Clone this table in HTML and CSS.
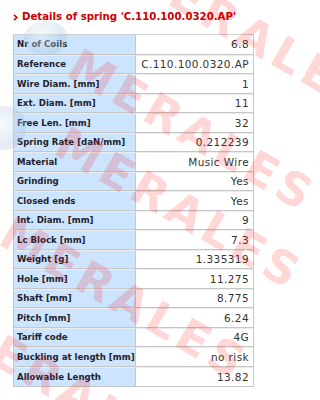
FILE: index.html
```html
<!DOCTYPE html>
<html>
<head>
<meta charset="utf-8">
<link rel="stylesheet" href="styles.css">
</head>
<body>
<div class="page">
  <h1 class="title">
    <svg class="chev" width="5" height="7" viewBox="0 0 5 7"><polyline points="1,0.8 3.8,3.5 1,6.2" fill="none" stroke="#cc0000" stroke-width="1.6"/></svg>
    <span>Details of spring 'C.110.100.0320.AP'</span>
  </h1>
  <table class="specs">
    <tr><td class="lbl">Nr of Coils</td><td class="val">6.8</td></tr>
    <tr><td class="lbl">Reference</td><td class="val">C.110.100.0320.AP</td></tr>
    <tr><td class="lbl">Wire Diam. [mm]</td><td class="val">1</td></tr>
    <tr><td class="lbl">Ext. Diam. [mm]</td><td class="val">11</td></tr>
    <tr><td class="lbl">Free Len. [mm]</td><td class="val">32</td></tr>
    <tr><td class="lbl">Spring Rate [daN/mm]</td><td class="val">0.212239</td></tr>
    <tr><td class="lbl">Material</td><td class="val">Music Wire</td></tr>
    <tr><td class="lbl">Grinding</td><td class="val">Yes</td></tr>
    <tr><td class="lbl">Closed ends</td><td class="val">Yes</td></tr>
    <tr><td class="lbl">Int. Diam. [mm]</td><td class="val">9</td></tr>
    <tr><td class="lbl">Lc Block [mm]</td><td class="val">7.3</td></tr>
    <tr><td class="lbl">Weight [g]</td><td class="val">1.335319</td></tr>
    <tr><td class="lbl">Hole [mm]</td><td class="val">11.275</td></tr>
    <tr><td class="lbl">Shaft [mm]</td><td class="val">8.775</td></tr>
    <tr><td class="lbl">Pitch [mm]</td><td class="val">6.24</td></tr>
    <tr><td class="lbl">Tariff code</td><td class="val">4G</td></tr>
    <tr><td class="lbl">Buckling at length [mm]</td><td class="val">no risk</td></tr>
    <tr><td class="lbl">Allowable Length</td><td class="val">13.82</td></tr>
  </table>

  <div class="globe globe-1"></div>
  <div class="globe globe-2"></div>
  <div class="watermark" aria-hidden="true">
    <div class="wm-line wm-1">MERALES</div>
    <div class="wm-line wm-2">MERALES</div>
    <div class="wm-line wm-3">MERALES</div>
    <div class="wm-line wm-4">MERALES</div>
    <div class="wm-line wm-5">MERALES</div>
  </div>
</div>
</body>
</html>
```

FILE: styles.css
```css
html, body {
  margin: 0;
  padding: 0;
  background: #ffffff;
}

.page {
  position: relative;
  width: 320px;
  height: 400px;
  overflow: hidden;
  font-family: "DejaVu Sans", Verdana, sans-serif;
}

.title {
  margin: 0;
  padding: 9px 0 0 13px;
  height: 25px;
  box-sizing: border-box;
  display: flex;
  align-items: center;
  gap: 4px;
  font-size: 10.2px;
  font-weight: bold;
  color: #cc0000;
  line-height: 12px;
}

.chev {
  display: block;
  flex: none;
}

.specs {
  margin: 9px 0 0 13px;
  width: 241px;
  border-collapse: separate;
  border-spacing: 0;
  border: 1px solid #c8c8c8;
  border-top-color: #d0d0d0;
}

.specs td {
  height: 19.5px;
  box-sizing: border-box;
  padding: 0;
  border-top: 1px solid #ececec;
  border-bottom: 1px solid #c6c6c6;
  vertical-align: middle;
}

.specs tr:first-child td {
  border-top: 0;
}

.specs tr:last-child td {
  border-bottom: 0;
}

.lbl {
  width: 122px;
  padding-left: 3px !important;
  background: #cce4fe;
  border-right: 1px solid #c6c6c6;
  font-size: 8.6px;
  font-weight: bold;
  color: #1e1e2a;
  white-space: nowrap;
}

.val {
  text-align: right;
  padding-right: 4px !important;
  font-size: 10.5px;
  letter-spacing: 0.4px;
  color: #333333;
  white-space: nowrap;
}

.globe {
  position: absolute;
  border-radius: 50%;
  pointer-events: none;
  background: radial-gradient(circle at 40% 40%, rgba(235, 242, 250, 0.45), rgba(160, 190, 220, 0.3) 60%, rgba(230, 200, 120, 0.25) 100%);
}

.globe-1 {
  left: 24px;
  top: 21px;
  width: 44px;
  height: 34px;
}

.globe-2 {
  left: -14px;
  top: 106px;
  width: 40px;
  height: 44px;
}

.watermark {
  position: absolute;
  inset: 0;
  pointer-events: none;
}

.wm-line {
  position: absolute;
  font-family: "DejaVu Sans", sans-serif;
  font-weight: bold;
  font-size: 46px;
  letter-spacing: 5px;
  line-height: 46px;
  color: rgba(255, 0, 0, 0.17);
  white-space: nowrap;
  transform-origin: 0 0;
  transform: rotate(30deg) translate(-23px, -22px);
}

.wm-1 { left: 150px; top: -25px; }
.wm-2 { left: 93px; top: 72px; }
.wm-3 { left: 80px; top: 150px; }
.wm-4 { left: 25px; top: 240px; }
.wm-5 { left: -28px; top: 333px; }
```
